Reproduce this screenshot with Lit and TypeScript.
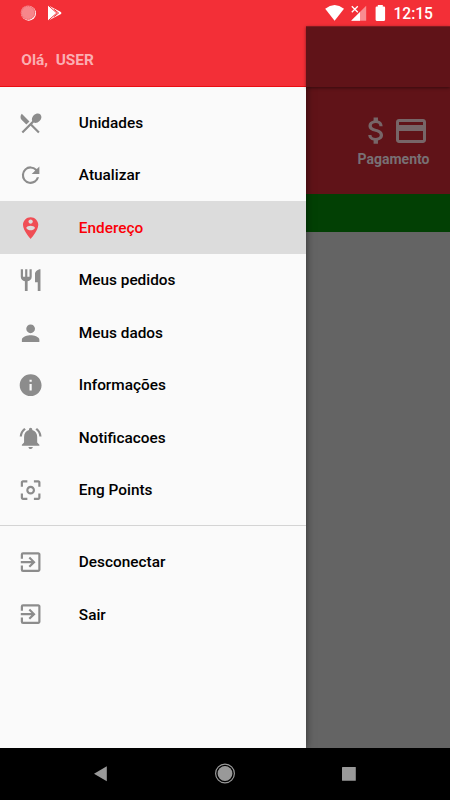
import { LitElement, html, css, svg } from "lit";
import { customElement, property } from "lit/decorators.js";

const ICONS: Record<string, string> = {
  dining:
    "M8.1 13.34l2.83-2.83L3.91 3.5a4.008 4.008 0 0 0 0 5.66l4.19 4.18zm6.78-1.81c1.53.71 3.68.21 5.27-1.38 1.91-1.91 2.28-4.65.81-6.12-1.46-1.46-4.2-1.1-6.12.81-1.59 1.59-2.09 3.74-1.38 5.27L3.7 19.87l1.41 1.41L12 14.41l6.88 6.88 1.41-1.41L13.41 13l1.47-1.47z",
  refresh:
    "M17.65 6.35A7.958 7.958 0 0 0 12 4a8 8 0 1 0 7.73 10h-2.08A5.99 5.99 0 0 1 12 18c-3.31 0-6-2.69-6-6s2.69-6 6-6c1.66 0 3.14.69 4.22 1.78L13 11h7V4l-2.35 2.35z",
  place:
    "M12 2C8.14 2 5 5.14 5 9c0 5.25 7 13 7 13s7-7.75 7-13c0-3.86-3.14-7-7-7zm0 2c1.1 0 2 .9 2 2 0 1.11-.9 2-2 2s-2-.89-2-2c0-1.1.9-2 2-2zm0 10c-1.67 0-3.14-.85-4-2.15.02-1.32 2.67-2.05 4-2.05s3.98.73 4 2.05c-.86 1.3-2.33 2.15-4 2.15z",
  restaurant:
    "M11 9H9V2H7v7H5V2H3v7c0 2.12 1.66 3.84 3.75 3.97V22h2.5v-9.03C11.34 12.84 13 11.12 13 9V2h-2v7zm5-3v8h2.5v8H21V2c-2.76 0-5 2.24-5 4z",
  person:
    "M12 12c2.21 0 4-1.79 4-4s-1.79-4-4-4-4 1.79-4 4 1.79 4 4 4zm0 2c-2.67 0-8 1.34-8 4v2h16v-2c0-2.66-5.33-4-8-4z",
  info: "M12 2C6.48 2 2 6.48 2 12s4.48 10 10 10 10-4.48 10-10S17.52 2 12 2zm1 15h-2v-6h2v6zm0-8h-2V7h2v2z",
  bell: "M7.58 4.08L6.15 2.65C3.75 4.48 2.17 7.3 2.03 10.5h2a8.445 8.445 0 0 1 3.55-6.42zm12.39 6.42h2c-.15-3.2-1.73-6.02-4.12-7.85l-1.42 1.43a8.495 8.495 0 0 1 3.54 6.42zM18 11c0-3.07-1.64-5.64-4.5-6.32V4c0-.83-.67-1.5-1.5-1.5s-1.5.67-1.5 1.5v.68C7.63 5.36 6 7.92 6 11v5l-2 2v1h16v-1l-2-2v-5zm-6 11c.14 0 .27-.01.4-.04.65-.14 1.18-.58 1.44-1.18.1-.24.15-.5.15-.78h-4c.01 1.1.9 2 2.01 2z",
  focus:
    "M5 15H3v4c0 1.1.9 2 2 2h4v-2H5v-4zM5 5h4V3H5c-1.1 0-2 .9-2 2v4h2V5zm14-2h-4v2h4v4h2V5c0-1.1-.9-2-2-2zm0 16h-4v2h4c1.1 0 2-.9 2-2v-4h-2v4zM12 8c-2.21 0-4 1.79-4 4s1.79 4 4 4 4-1.79 4-4-1.79-4-4-4zm0 6c-1.1 0-2-.9-2-2s.9-2 2-2 2 .9 2 2-.9 2-2 2z",
  exit: "M10.09 15.59L11.5 17l5-5-5-5-1.41 1.41L12.67 11H3v2h9.67l-2.58 2.59zM19 3H5a2 2 0 0 0-2 2v4h2V5h14v14H5v-4H3v4a2 2 0 0 0 2 2h14c1.1 0 2-.9 2-2V5c0-1.1-.9-2-2-2z",
  money:
    "M11.8 10.9c-2.27-.59-3-1.2-3-2.15 0-1.09 1.01-1.85 2.7-1.85 1.78 0 2.44.85 2.5 2.1h2.21c-.07-1.72-1.12-3.3-3.21-3.81V3h-3v2.16c-1.94.42-3.5 1.68-3.5 3.61 0 2.31 1.91 3.46 4.7 4.13 2.5.6 3 1.48 3 2.41 0 .69-.49 1.79-2.7 1.79-2.06 0-2.87-.92-2.98-2.1h-2.2c.12 2.19 1.76 3.42 3.68 3.83V21h3v-2.15c1.95-.37 3.5-1.5 3.5-3.55 0-2.84-2.43-3.81-4.7-4.4z",
  card: "M20 4H4c-1.11 0-1.99.89-1.99 2L2 18c0 1.11.89 2 2 2h16c1.11 0 2-.89 2-2V6c0-1.11-.89-2-2-2zm0 14H4v-6h16v6zm0-10H4V6h16v2z",
};

@customElement("md-icon")
class MdIcon extends LitElement {
  @property() name = "";
  static styles = css`
    :host { display: block; width: 26.25px; height: 26.25px; flex: none; }
    svg { display: block; width: 100%; height: 100%; fill: currentColor; }
  `;
  render() {
    return html`<svg viewBox="0 0 24 24"><path d=${ICONS[this.name] ?? ""}></path></svg>`;
  }
}

interface Entry {
  icon: string;
  label: string;
  active?: boolean;
}

const MAIN: Entry[] = [
  { icon: "dining", label: "Unidades" },
  { icon: "refresh", label: "Atualizar" },
  { icon: "place", label: "Endereço", active: true },
  { icon: "restaurant", label: "Meus pedidos" },
  { icon: "person", label: "Meus dados" },
  { icon: "info", label: "Informações" },
  { icon: "bell", label: "Notificacoes" },
  { icon: "focus", label: "Eng Points" },
];
const SESSION: Entry[] = [
  { icon: "exit", label: "Desconectar" },
  { icon: "exit", label: "Sair" },
];

@customElement("app-root")
class AppRoot extends LitElement {
  static styles = css`
    :host {
      display: flex;
      flex-direction: column;
      position: relative;
      width: 450px;
      height: 800px;
      overflow: hidden;
      font-family: Roboto, "Liberation Sans", sans-serif;
      background: #000;
    }
    * { box-sizing: border-box; }
    .status {
      flex: none;
      display: flex;
      justify-content: space-between;
      height: 26px;
      background: #f32f37;
    }
    .status svg { display: block; }
    .clock {
      width: 57px;
      padding-left: 0.5px;
      color: #fff;
      font-size: 15.6px;
      font-weight: 500;
      line-height: 28px;
      letter-spacing: -0.05px;
    }
    .right { display: flex; }
    .body { flex: none; display: flex; height: 722px; }
    .drawer {
      flex: none;
      width: 306.4px;
      background: #fafafa;
      position: relative;
      box-shadow: 0 0 8px rgba(0, 0, 0, 0.55);
      clip-path: inset(0 -12px 0 0);
    }
    .header {
      height: 61px;
      background: #f32f37;
      border-bottom: 1px solid #ea0d12;
      padding: 23px 0 0 21.3px;
      color: #fbaeb2;
      font-size: 15.4px;
      line-height: 22px;
      font-weight: 700;
      white-space: pre;
    }
    .group { display: flex; flex-direction: column; }
    .main { padding-top: 9.4px; padding-bottom: 8.6px; }
    .session { padding-top: 9.5px; border-top: 1px solid #d4d4d4; }
    .item {
      display: flex;
      align-items: center;
      gap: 35.4px;
      height: 52.5px;
      padding-left: 17.2px;
      color: #000;
      font-size: 15.36px;
      font-weight: 500;
    }
    .item span { padding-top: 0.7px; }
    .item md-icon { color: #8c8c8c; transform: translateX(0.5px); }
    .active { background: #dcdcdc; color: #fb0007; }
    .item.active md-icon { color: #f04e55; }
    .page { flex: 1; display: flex; flex-direction: column; background: #646464; }
    .toolbar {
      height: 61px;
      background: #601318;
      border-top: 1px solid #801c21;
      box-shadow: 0 1px 3px rgba(0, 0, 0, 0.45);
      z-index: 0;
      position: relative;
    }
    .pay {
      height: 106.5px;
      background: #601318;
      display: flex;
      flex-direction: column;
      align-items: flex-end;
      padding: 26px 20.5px 0 0;
      color: #776668;
    }
    .payicons { display: flex; margin-right: 0.5px; }
    .payicons md-icon { width: 36px; height: 36px; }
    .payicons .money { width: 35px; height: 35px; margin-right: -1px; }
    .paylabel { font-size: 14px; font-weight: 700; line-height: 18px; margin-top: 0.5px; color: #787074; }
    .green { height: 38.5px; background: #024004; }
    .nav {
      flex: none;
      height: 52px;
      display: grid;
      grid-template-columns: repeat(3, 124.3px);
      justify-content: center;
      justify-items: center;
      align-items: center;
      background: #000;
    }
    .nav svg { display: block; }
  `;

  private item(e: Entry) {
    return html`<div class="item ${e.active ? "active" : ""}">
      <md-icon .name=${e.icon}></md-icon><span>${e.label}</span>
    </div>`;
  }

  private ticks() {
    return svg`<circle cx="28" cy="12.7" r="6.6" fill="none" stroke="#ee5960" stroke-width="1" stroke-dasharray="1 1"></circle>`;
  }

  render() {
    return html`
      <div class="status">
        <svg width="80" height="26" viewBox="0 0 80 26">
          <circle cx="28.7" cy="13.4" r="7.3" fill="#fff"></circle>
          <circle cx="28" cy="12.7" r="7.3" fill="#f7868b"></circle>
          ${this.ticks()}
          <path d="M48 5.2L60 11.4Q62.8 13 60 14.6L48 20.8Z" fill="#fff"></path>
          <path d="M48 5.2L56.8 13L48 20.8M53.8 9.2L58.6 13L53.8 16.8" fill="none" stroke="#f32f37" stroke-width="1"></path>
        </svg>
        <div class="right">
          <svg width="68" height="26" viewBox="325 0 68 26">
            <path d="M325.2 8.7Q334.6 1.5 344 8.7L334.6 20.7Z" fill="#fff"></path>
            <path d="M366.2 5.7V20.8H351.2Z" fill="#f98b90"></path>
            <path d="M360 12V20.8H351.2Z" fill="#fff"></path>
            <path d="M351 5.2H359.5V11.6L358 13L351 13Z" fill="#f32f37"></path>
            <path d="M351.8 6.3L357.8 12.3M357.8 6.3L351.8 12.3" stroke="#fff" stroke-width="1.3"></path>
            <path d="M377.8 5H382.8V6.6H384Q385.1 6.6 385.1 7.7V19.8Q385.1 20.9 384 20.9H376.7Q375.6 20.9 375.6 19.8V7.7Q375.6 6.6 376.7 6.6H377.8Z" fill="#fff"></path>
          </svg>
          <div class="clock">12:15</div>
        </div>
      </div>
      <div class="body">
        <div class="drawer">
          <div class="header">Olá,  USER</div>
          <div class="group main">${MAIN.map((e) => this.item(e))}</div>
          <div class="group session">${SESSION.map((e) => this.item(e))}</div>
        </div>
        <div class="page">
          <div class="toolbar"></div>
          <div class="pay">
            <div class="payicons">
              <md-icon class="money" .name=${"money"}></md-icon>
              <md-icon .name=${"card"}></md-icon>
            </div>
            <div class="paylabel">Pagamento</div>
          </div>
          <div class="green"></div>
        </div>
      </div>
      <div class="nav">
        <svg width="22" height="22" viewBox="0 0 22 22"><path d="M4 10.8L16.8 3.3V18.3Z" fill="#999"></path></svg>
        <svg width="22" height="22" viewBox="0 0 22 22">
          <circle cx="11" cy="10.5" r="9.4" fill="none" stroke="#999" stroke-width="1.2"></circle>
          <circle cx="11" cy="10.5" r="7.4" fill="#999"></circle>
        </svg>
        <svg width="22" height="22" viewBox="0 0 22 22"><rect x="4" y="4" width="13.8" height="13.8" rx="0.5" fill="#999"></rect></svg>
      </div>
    `;
  }
}
